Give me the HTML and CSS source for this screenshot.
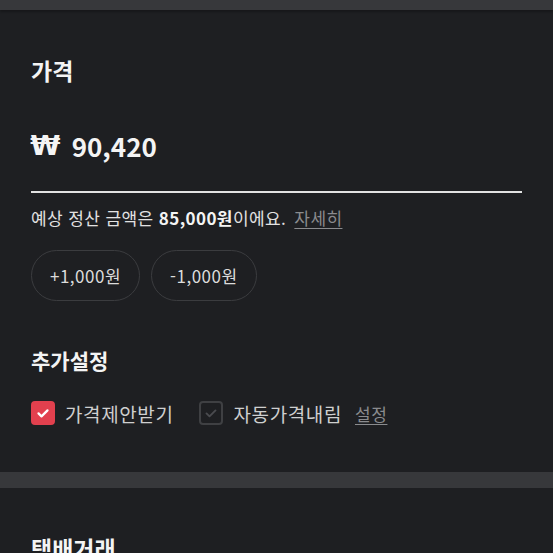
FILE: index.html
```html
<!DOCTYPE html>
<html lang="ko">
<head>
    <meta charset="UTF-8">
    <meta name="viewport" content="width=device-width, initial-scale=1.0">
    <title>가격</title>
    <link rel="stylesheet" href="styles.css">
</head>
<body>
    <div class="top-bar"></div>

    <section class="section">
        <h2 class="title">가격</h2>
        <div class="price-field">
            <span class="won">₩</span>
            <span class="price">90,420</span>
        </div>
        <p class="hint">예상 정산 금액은 <b>85,000원</b>이에요. <a href="#" class="link">자세히</a></p>
        <div class="steps">
            <button type="button" class="step">+1,000원</button>
            <button type="button" class="step">-1,000원</button>
        </div>

        <h3 class="subtitle">추가설정</h3>
        <div class="options">
            <label class="option">
                <span class="box checked">
                    <svg viewBox="0 0 24 24" width="18" height="18"><path d="M6 12.5l4 4 8-8" fill="none" stroke="#fff" stroke-width="3" stroke-linecap="round" stroke-linejoin="round"/></svg>
                </span>
                가격제안받기
            </label>
            <label class="option">
                <span class="box">
                    <svg viewBox="0 0 24 24" width="18" height="18"><path d="M6 12.5l4 4 8-8" fill="none" stroke="#4a4b4f" stroke-width="2.5" stroke-linecap="round" stroke-linejoin="round"/></svg>
                </span>
                자동가격내림
                <a href="#" class="link">설정</a>
            </label>
        </div>
    </section>

    <div class="divider"></div>

    <section class="section">
        <h2 class="title">택배거래</h2>
    </section>
</body>
</html>
```

FILE: styles.css
```css
* {
    box-sizing: border-box;
    margin: 0;
    padding: 0;
    font-family: 'Noto Sans CJK KR', 'Noto Sans', sans-serif;
}

body {
    background: #1e1f22;
    color: #e8e8e8;
    width: 553px;
    height: 553px;
    overflow: hidden;
}

.top-bar {
    height: 10px;
    background: #37383b;
    box-shadow: 0 2px 2px rgba(0, 0, 0, 0.25);
}

.divider {
    height: 16px;
    background: #37383b;
}

.section {
    padding: 44px 31px 47px;
}

.title {
    font-size: 23px;
    line-height: 32px;
    font-weight: bold;
    color: #f4f4f4;
}

.price-field {
    display: flex;
    align-items: center;
    gap: 12px;
    margin-top: 42px;
    padding-bottom: 27px;
    border-bottom: 2px solid #e2e2e2;
    height: 65px;
    color: #f4f4f4;
}

.won {
    font-family: 'DejaVu Sans', sans-serif;
    font-size: 26px;
    line-height: 36px;
    font-weight: bold;
    transform: scaleX(1.05);
}

.price {
    font-size: 26px;
    line-height: 36px;
    font-weight: bold;
}

.hint {
    margin-top: 13px;
    font-size: 17px;
    line-height: 24px;
    letter-spacing: 0.4px;
    color: #e2e2e2;
}

.hint b {
    font-weight: bold;
    color: #f4f4f4;
}

.link {
    color: #8a8b8e;
    text-decoration: underline;
    text-underline-offset: 3px;
    margin-left: 3px;
}

.steps {
    display: flex;
    gap: 11px;
    margin-top: 20px;
}

.step {
    height: 51px;
    padding: 0 18px;
    border: 1.5px solid #3b3c3f;
    border-radius: 26px;
    background: transparent;
    color: #dcdcdc;
    font-size: 17px;
    letter-spacing: 0.5px;
}

.subtitle {
    margin-top: 45px;
    font-size: 21px;
    line-height: 28px;
    font-weight: bold;
    color: #f4f4f4;
}

.options {
    display: flex;
    gap: 26px;
    margin-top: 27px;
}

.option {
    display: flex;
    align-items: center;
    gap: 10px;
    height: 24px;
    font-size: 19px;
    letter-spacing: 0.6px;
    color: #cfcfcf;
}

.option .link {
    font-size: 17px;
    margin-left: 3px;
}

.box {
    width: 24px;
    height: 24px;
    border-radius: 4px;
    border: 2px solid #3f4043;
    display: flex;
    align-items: center;
    justify-content: center;
}

.box.checked {
    background: #e2404e;
    border-color: #e2404e;
}
```
